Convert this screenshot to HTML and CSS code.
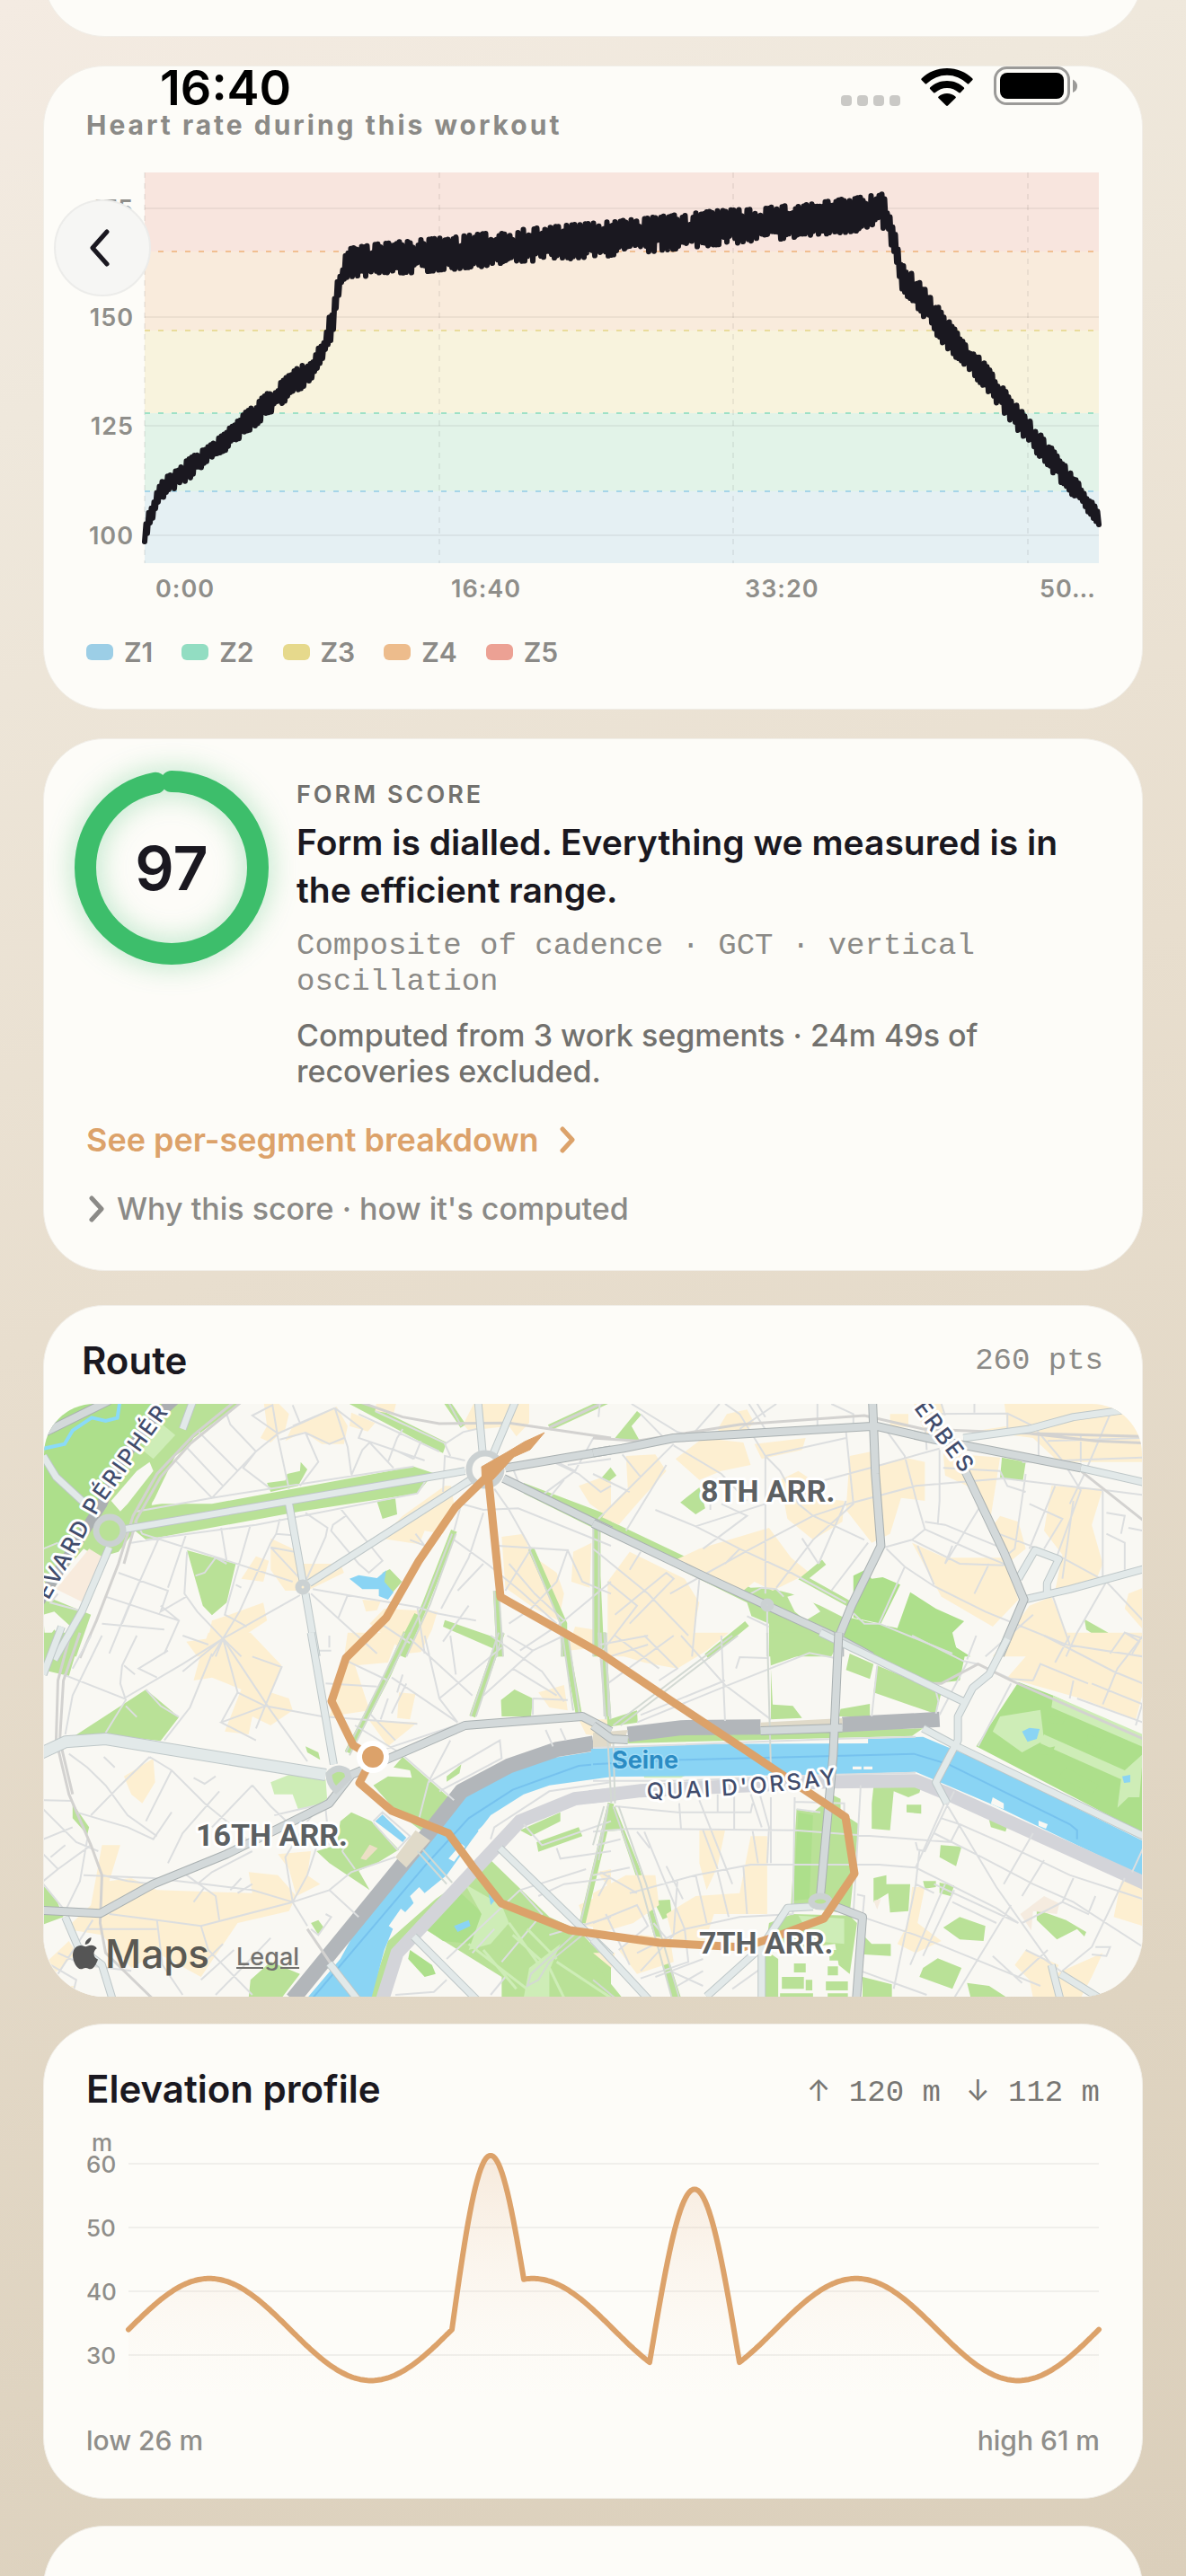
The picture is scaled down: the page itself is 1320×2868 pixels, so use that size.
FILE: index.html
```html
<!DOCTYPE html>
<html lang="en">
<head>
<meta charset="utf-8">
<meta name="viewport" content="width=device-width, initial-scale=1">
<title>Workout detail</title>
<link rel="stylesheet" href="styles.css">
</head>
<body>
<div class="screen">
  <header class="status" aria-label="Status bar">
    <time class="status-time">16:40</time>
    <div class="status-icons">
      <svg width="66" height="12" viewBox="0 0 66 12" aria-hidden="true"><g fill="#cac9c6"><rect width="12" height="12" rx="4"/><rect x="18" width="12" height="12" rx="4"/><rect x="36" width="12" height="12" rx="4"/><rect x="54" width="12" height="12" rx="4"/></g></svg>
      <svg width="58" height="42" viewBox="0 0 58 42" aria-hidden="true"><path d="M29 0C18 0 8 4 .8 11.300Q-.2 12.300 .8 13.300L4.500 17Q5.500 18 6.500 17A32 32 0 0 1 51.500 17Q52.500 18 53.500 17L57.200 13.300Q58.200 12.300 57.200 11.300C50 4 40 0 29 0ZM29 14C21.500 14 15 16.800 10.300 21.300Q9.300 22.300 10.300 23.300L14.200 27.200Q15 28 16 27.100A19 19 0 0 1 42 27.100Q43 28 43.800 27.200L47.700 23.300Q48.700 22.300 47.700 21.300C43 16.800 36.500 14 29 14ZM29 28C25.300 28 22 29.300 19.600 31.500Q18.700 32.400 19.600 33.300L28 41.500Q29 42.400 30 41.500L38.400 33.300Q39.300 32.400 38.400 31.500C36 29.300 32.700 28 29 28Z"/></svg>
      <svg width="94" height="44" viewBox="0 0 94 44" aria-hidden="true"><rect x="1.500" y="1.500" width="82" height="40" rx="13" fill="none" stroke="#9b9a98" stroke-width="3"/><rect x="7" y="7" width="71" height="29" rx="8"/><path d="M88 14.500Q93 17 93 22T88 29Z" fill="#9b9a98"/></svg>
    </div>
  </header>
  <button class="back" type="button" aria-label="Back">
    <svg width="22" height="42" viewBox="0 0 22 42" aria-hidden="true"><path d="M19 3L3 21L19 39" fill="none" stroke="#1a1820" stroke-width="5" stroke-linecap="round" stroke-linejoin="round"/></svg>
  </button>

  <main class="feed">
    <section class="card card-previous"></section>

    <section class="card heart">
      <h2 class="eyebrow">Heart rate during this workout</h2>
      <svg class="chart" viewBox="0 0 1128 490" role="img" aria-label="Heart rate over time">
        <rect x="65" y="0" width="1062" height="88" fill="#f8e5de"/>
        <rect x="65" y="88" width="1062" height="88" fill="#f9ebdc"/>
        <rect x="65" y="176" width="1062" height="92" fill="#f8f3dd"/>
        <rect x="65" y="268" width="1062" height="87" fill="#e2f3e8"/>
        <rect x="65" y="355" width="1062" height="80" fill="#e5f0f3"/>
        <path class="grid" d="M65 40H1127M65 161H1127M65 282H1127M65 404H1127"/>
        <path class="grid-dashed" d="M65 0V435M393 0V435M720 0V435M1048 0V435"/>
        <g class="zone-edge">
          <path d="M65 88H1127" stroke="#f1bf91"/><path d="M65 176H1127" stroke="#e9dc9b"/>
          <path d="M65 268H1127" stroke="#9ee1c6"/><path d="M65 355H1127" stroke="#a6d5e8"/>
        </g>
        <path id="heart-line" class="heart-line"/>
        <g class="axis axis-strong" text-anchor="end">
          <text x="53" y="50">175</text><text x="53" y="171">150</text><text x="53" y="292">125</text><text x="53" y="414">100</text>
        </g>
        <g class="axis axis-strong">
          <text x="77" y="473">0:00</text><text x="406" y="473">16:40</text><text x="733" y="473">33:20</text><text x="1061" y="473">50…</text>
        </g>
      </svg>
      <ul class="legend">
        <li><i class="z1"></i>Z1</li><li><i class="z2"></i>Z2</li><li><i class="z3"></i>Z3</li><li><i class="z4"></i>Z4</li><li><i class="z5"></i>Z5</li>
      </ul>
    </section>

    <section class="card form">
      <div class="form-top">
        <div class="ring">
          <svg viewBox="0 0 216 216" aria-hidden="true"><circle cx="108" cy="108" r="96" pathLength="100" transform="rotate(-90 108 108)"/></svg>
          <strong>97</strong>
        </div>
        <div class="form-copy">
          <h2 class="form-label">FORM SCORE</h2>
          <p class="headline">Form is dialled. Everything we measured is in the efficient range.</p>
          <p class="mono form-mono">Composite of cadence · GCT · vertical oscillation</p>
          <p class="form-note">Computed from 3 work segments · 24m 49s of recoveries excluded.</p>
        </div>
      </div>
      <a class="breakdown" href="#segments">See per-segment breakdown
        <svg width="20" height="30" viewBox="0 0 20 30" aria-hidden="true"><path d="M4 3L15 15L4 27"/></svg></a>
      <button class="why" type="button">
        <svg width="20" height="30" viewBox="0 0 20 30" aria-hidden="true"><path d="M6 3L17 15L6 27"/></svg>
        Why this score · how it's computed</button>
    </section>

    <section class="card route">
      <div class="route-head"><h2 class="title">Route</h2><span class="mono">260 pts</span></div>
      <div class="map">
        <svg viewBox="49 1562 1222 660" role="img" aria-label="Map of the route through Paris">
          <defs>
            <g id="nw-light"><path d="M240 785L1170 590M690 700L728 960M735 1000L765 1210M745 965L1185 620M1205 350L1218 530M1310 350L1248 530M20 540L55 610L170 740M430 350L400 450M200 845L125 1060L50 1220"/></g>
            <g id="nw-grey"><path d="M1275 615L1568 790M1280 580L1568 520M10 470L200 355"/></g>
            <g id="ne-light"><path d="M1330 580L1510 630M1010 480L1190 450L1310 410L1470 383M1175 1020L1300 985L1510 915M1160 950L1205 855L1270 885L1238 965V998"/></g>
            <g id="ne-grey"><path d="M0 530L80 515L220 480L770 440L930 485L1080 520L1330 580M762 350L770 600L785 840L705 1040L672 1140V1210M1015 590L1120 860L1175 1020L1110 1205M0 765L290 935L475 1040L670 1150L760 1210"/></g>
            <g id="sw-light"><path d="M750 -10L812 430M80 940L115 1040L180 1100L210 1220M1265 710L1568 1070M1030 1005L1205 1220M800 1095L880 1220M70 -30L20 130"/></g>
            <g id="sw-wide"><path d="M10 395L80 355L190 345L790 465"/></g>
            <g id="sw-grey"><path d="M20 918L175 928L320 830L520 730L800 560L860 465L1170 300L1490 270L1568 320"/></g>
            <g id="se-light"><path d="M620 -10L1010 220M1130 10L1080 130L1035 175L995 270V350L935 490L965 560M900 310L1000 375L1505 672M0 1015L155 1220M310 1205L460 1040V1220M460 1040L530 910L600 905M1250 1100L1275 1220M1275 1130L1380 1210"/></g>
            <g id="se-grey"><path d="M670 -10L655 400L620 870M650 900L735 940L718 1220M0 300L50 345L95 348M457 318L680 308"/></g>
          </defs>

          <rect x="49" y="1562" width="1222" height="660" fill="#f9f8f3"/>

          <g class="areas">
            <g transform="translate(40 1440) scale(.40816 .33333)">
              <path class="park-deep" d="M10 350H385L240 600L190 740L150 800L20 860Z"/>
              <path class="park" d="M385 350H570L430 480L315 700H480L1030 575L1085 598L1040 665L720 725L300 820L270 790L225 860L170 880L130 850L60 950L10 1020V850L150 790L230 560Z"/>
              <path class="ground" d="M275 590L310 560L320 590L250 700L230 725L205 690Z"/>
              <path class="ground" d="M440 485L480 490V670L315 705L340 640L380 540Z"/>
              <path class="park-light" d="M340 430L380 470L320 550L290 520Z"/>
              <path class="park" d="M10 1030L50 1020L150 1070L110 1210H10Z"/>
              <path class="ground" d="M20 1070L50 1060L95 1110L70 1150L50 1120L25 1160Z"/>
              <path fill="#f8ebdd" d="M145 850L185 880L130 1030L55 985Z"/>
              <path class="park" d="M630 630L680 622L685 600L720 590L722 560L740 585L715 640L640 660ZM930 692L980 682L985 735L945 750ZM412 855L545 900L520 1030L480 1072L455 1040ZM830 350H880L1120 495L1110 530L1090 520ZM1330 630L1568 740V810L1330 665ZM1115 1088L1260 1150L1250 1185L1110 1110ZM945 930L965 918L998 960L970 1000L945 970ZM1540 620L1568 590V630Z"/>
              <path class="built" d="M620 350H650L690 400L680 450L640 495L612 480L630 440ZM700 440L820 375L850 440L840 500L780 500L730 460L680 490ZM860 395L925 430L905 458L855 440ZM930 350H985L975 400L925 390ZM1165 435L1200 350H1345V430L1310 475L1290 440L1180 455ZM1115 640H1132L1140 700L1110 800L1060 790L1045 835L940 815L1000 740ZM640 815L700 850L725 900L830 900L840 930L740 990L680 990L640 920ZM560 950L600 875L635 890L620 960ZM480 1090L540 1065L620 1030L630 1090L580 1130V1210H440L410 1160L470 1150ZM910 1100L950 1050L1095 1060L1080 1120L1050 1195L1010 1200ZM1270 810L1330 800L1350 870L1420 930L1440 1000L1425 1090L1360 1050L1280 980ZM1480 640L1568 600V750L1510 700ZM1470 1110L1520 1120L1530 1180L1450 1190ZM1465 860L1515 830L1510 980L1460 960ZM890 1020L940 1025L930 1055L900 1060Z"/>
              <path class="tree-line" d="M1140 790L1060 1040L1000 1210M1255 990L1265 1210M1527 780V1210M1350 850L1440 1100V1210M1115 350L1165 440M1568 350L1400 445M1040 1070L985 1200"/>
              <path class="water" d="M855 950L880 938L930 948L955 922L950 960L975 995L960 1020L935 1008V985L890 985ZM10 430L45 385L80 375L20 460Z"/>
              <path class="stream" d="M10 518L78 500L100 455L152 412L190 423L222 413L230 350"/>
            </g>
            <g transform="translate(660 1440) scale(.40816 .33333)">
              <path class="park" d="M120 390L132 402L105 440L130 495L60 480ZM22 615L48 578L64 605L40 628ZM238 695L290 645L306 715L280 735ZM0 730L430 980L470 978L540 1000L620 1040L700 1090L650 1210H480V1100L432 1075L420 1030L0 775ZM1115 545L1180 560L1172 625L1110 612ZM1340 1085L1405 1130L1385 1152L1345 1120Z"/>
              <path class="park-deep" d="M710 940L740 922L760 950L790 945L838 970L785 1100L710 1080ZM865 995L935 1050L1012 1092L980 1130L990 1180L1030 1210H770L680 1160L700 1080L830 1115Z"/>
              <path class="ground" d="M530 1010L560 1000L600 1030L620 1060L580 1090L550 1060Z"/>
              <path class="built" d="M365 400L420 385L440 430L400 470L355 480L340 450ZM90 540L170 535L200 590L120 700L70 770L25 745L60 690L95 650ZM225 550L300 480L410 495L430 570L350 590L290 620ZM440 500L580 480L570 520L460 550ZM510 620L560 590L620 640L610 680L685 690L680 760L600 820L530 750ZM700 540L760 525L780 570L850 545L905 560V690L840 680L810 800L760 830L690 720ZM810 400H860V445L810 440ZM870 350H950L960 470L905 465ZM1120 350H1440L1500 410V560L1270 560L1200 480L1050 455L1130 440ZM955 530L1110 545L1085 740L1020 640L960 605ZM1250 640L1390 650L1360 770L1390 900L1370 960L1260 990L1280 870L1230 790ZM1110 740L1160 760L1180 850L1130 900L1080 790ZM870 830L960 880L1120 880L1160 1020L1090 1110L950 1010ZM1190 1040L1250 1010L1320 1210H1090ZM290 850L480 780L540 880L590 930L490 990L440 960L400 1000L220 890ZM40 960L100 860L250 950L290 1030L260 1210H40ZM1460 1000L1500 980V1120L1450 1050Z"/>
              <path class="tree-line" d="M12 780V940L22 1210M630 895L575 950L700 1035M420 1100L310 1210"/>
            </g>
            <g transform="translate(40 1820) scale(.40816 .33333)">
              <path class="park" d="M10 -10H125L90 135L20 115ZM105 335L300 180L390 272L340 352L190 330ZM1268 215L1305 180L1355 210L1350 270H1270ZM920 500L960 470L1025 475L1020 450L975 440L1000 405L1125 540L1060 660L985 590ZM830 620L860 590L915 620L990 715L930 760L880 785L910 850L800 760L765 720L820 700ZM735 370L770 390L775 415L740 390ZM100 560L145 640L140 665L100 610ZM20 835L55 880L75 940L20 965ZM750 960L770 950L785 975L770 1000ZM580 1210L585 1150L640 1090L720 1130L670 1210ZM1120 470L1160 430L1155 460L1120 488ZM1365 690L1480 640L1490 670L1370 722ZM1320 650L1430 590V620L1350 670Z"/>
              <path class="park-light" d="M640 490L690 465L790 480L795 560L715 580L700 530L650 530Z"/>
              <path class="park" d="M1240 750L1400 940L1480 985L1568 1100V1210H1270V1140L1060 980L1000 1060L960 1210H910L960 1020L1090 880Z"/>
              <path class="park-deep" d="M1150 850L1220 930L1190 1030L1110 1020L1065 980L1090 900Z"/>
              <path class="park-light" d="M1170 830L1270 900L1290 960L1240 1030L1180 1050L1215 930ZM1330 1210L1345 1110L1430 1030L1400 1120L1400 1210Z"/>
              <path class="ground" d="M1010 1040L1090 1110L1120 1140L1085 1190L1035 1185V1140L1000 1080Z"/>
              <path class="park-deep" d="M1020 1050L1080 1100L1090 1130L1060 1140L1015 1080Z"/>
              <path class="built" d="M470 -10H585L670 100L640 190L690 210L700 250L640 300L590 270L580 330L515 320L550 210L560 180L480 140L430 150L450 60ZM850 -10H990L960 90L870 100L910 250L800 270L830 160ZM990 190L1035 195L1020 280L985 275ZM910 285L1040 290L960 370ZM1370 190L1440 165L1450 250L1400 240ZM1480 280H1568V340L1500 330ZM240 470L320 410L325 490L290 560L260 530ZM180 700L230 700L200 820L260 810L330 850L590 860L580 790L660 800L710 870L690 920L550 960L450 1140L330 1060L260 1110L180 1000L80 980L150 900ZM660 730L750 720L740 800L775 830L710 870L690 780ZM20 1100L90 1020L110 1060L50 1130ZM40 1170H105V1210H50ZM1480 900L1568 850V980L1500 970ZM1530 790L1568 780V850Z"/>
              <path class="tree-line" d="M1010 -10L960 130L850 390M1270 -10L1190 270M1440 -10L1480 260M1545 -10L1560 270M1568 560L1490 960"/>
              <path fill="#ecdfc5" d="M885 745L910 698L932 710L900 750Z"/>
              <path class="water" d="M740 1210L830 1080L870 990L950 870L1060 690L1130 590L1180 530L1290 460L1400 410L1568 378V472L1400 500L1330 530L1240 600L1190 680L1120 800L1040 880L980 960L950 1050L915 1210ZM925 620L945 598L1010 675L1000 690ZM1140 970L1180 950L1185 970L1150 990ZM1230 830L1262 870L1240 900Z"/>
              <path class="current" d="M755 1210L1060 770L1180 610L1300 515L1480 435L1568 425"/>
              <path class="ground" d="M1020 870L1045 840L1060 860L1035 905ZM962 970L995 912L1008 925L980 985ZM1265 590L1290 570L1300 580L1270 605ZM1125 745L1160 695L1170 705L1140 755ZM1205 650L1225 628L1232 640L1215 665Z"/>
              <path class="quay-south" d="M945 1215L985 1060L1160 830L1320 620L1470 545L1580 530"/>
              <path class="quay" d="M700 1215L1070 660L1160 520L1290 435L1420 380L1520 360"/>
              <path fill="#e0dac9" d="M980 740L1035 650L1075 685L1010 775ZM1518 340L1568 320V375H1522Z"/>
            </g>
            <g transform="translate(660 1820) scale(.40816 .33333)">
              <path class="park" d="M480 -10H640L625 50L590 55L485 100V280L570 275L545 235L490 230ZM700 60L765 95L755 145L690 115ZM775 100L950 190L935 262L765 190ZM675 245L755 228V270H670ZM555 580L600 590L630 560L650 530L675 545V590L725 630L700 930L540 900ZM545 930L700 935L720 960L700 1130L670 1100L660 1030L470 1060L470 1210H505V1080L470 1050L480 960ZM765 505H895L890 525L860 540L820 520L810 650L760 645V560ZM855 565H895V595L855 590ZM948 700L1005 705L990 770L945 740ZM765 810L800 800V830L865 830L860 920L810 925L805 860L765 890ZM900 820H935V840L905 845ZM945 825L985 835L975 870L945 860ZM165 885L210 882L215 935L190 948ZM955 975L1000 940L1070 970L1065 1020L1000 1015ZM1210 915L1290 950L1345 990L1340 1005L1320 980L1265 1015L1210 950ZM900 1110L940 1078L1005 1110L980 1180L890 1140ZM740 1005L760 1030L812 1030V1070L740 1065ZM735 1140L815 1165V1210H735ZM1020 1160L1080 1170L1130 1210H1030ZM1080 615H1135L1125 655L1085 640ZM515 1140H575V1180H515ZM548 1095H580V1125H548ZM635 1155H695V1185H635ZM640 1105H668V1135H640ZM580 1150H598V1185H580ZM645 1050H670V1085H645ZM510 1195H600V1210H510ZM640 1195H695V1210H640ZM0 1090L80 1210H0ZM85 345L250 318L900 310L870 335L95 360ZM40 600L60 570L125 770L240 1210H215L130 850L75 650L30 655ZM20 -10H35L45 280L120 250L122 290L40 305Z"/>
              <path class="park-deep" d="M680 -10H975L990 40L1015 60L1000 150L930 160L760 75ZM1160 155L1255 200L1500 340V660L1045 370Z"/>
              <path class="park-light" d="M1255 200L1500 330V372L1250 240ZM1110 270L1220 248L1230 350L1170 390L1090 320ZM1230 330L1450 450L1500 395L1490 540H1460L1430 575L1440 480L1220 360ZM560 935L685 945V1030L600 1020ZM135 455H270L240 475H140Z"/>
              <path class="park-deep" d="M1240 270L1290 275L1280 295L1245 290ZM1225 380L1260 370L1250 400L1215 395ZM1290 440L1380 500L1360 530L1270 470ZM1350 330L1400 350L1380 380L1345 360ZM560 590L600 600L590 880L545 885Z"/>
              <path class="built" d="M40 -10H370L310 50L230 110L140 90L60 60ZM1150 -10H1500V190L1480 280L1330 210L1130 140L1180 70L1130 30ZM0 280H15V320L0 310ZM290 650H360L340 770L310 850L290 760ZM430 670H475V930H330L300 1040L220 1020L200 930L280 870L400 860ZM0 860L90 800L170 800L180 900L110 960L0 1000ZM870 840H905L885 960L950 1020L880 1060L830 1030L860 960ZM1440 820L1500 830V970L1420 940ZM1150 1100L1180 1050L1270 1100L1260 1130L1390 1060L1360 1140L1330 1210H1200L1190 1150ZM70 1050L130 1000L210 1010L220 1090L120 1130ZM0 1060L60 1060L50 1110Z"/>
              <path fill="#f5ebdf" d="M1165 930L1230 870L1272 895L1265 930L1200 920L1195 985ZM765 885L785 880L775 915Z"/>
              <path class="water" d="M-5 378L300 362L750 360V345L900 338L1060 420L1510 692V810L1320 700L1100 570L880 455L640 465L-5 472ZM1170 320L1190 308L1218 312L1210 345L1185 355ZM1443 470L1465 465V490L1448 492Z"/>
              <path class="current" d="M0 430L240 415L875 395L970 430L1300 630L1320 650V680"/>
              <path class="ground" d="M1090 540L1120 560V580L1085 562ZM1215 618L1240 630L1235 645L1215 635ZM708 437H732V447H708ZM738 437H762V447H738Z"/>
              <path class="quay-south" d="M-10 539L130 518L640 488L880 485L960 525L1510 830"/>
              <path class="quay" d="M95 330L240 308L457 305M680 297L945 280"/>
              <path fill="#e0dac9" d="M457 290L680 276V298L457 308ZM0 325L95 315L85 350L0 378Z"/>
            </g>
          </g>

          <g class="streets">
            <g transform="translate(40 1440) scale(.40816 .33333)">
              <path d="M520 400L530 435L600 525L480 680L380 555M410 510L510 640M440 455L550 590L600 525L660 465L590 405L645 370L660 480L690 650M600 525L565 580L640 650M660 465L815 380L700 440M815 380L850 510L860 600M815 380L890 450L880 480L1060 555M665 485L735 462L800 500L840 480M735 462L770 560L720 640M910 495L890 520L860 605M910 495L975 580M970 515L1030 550M960 560L985 480L1000 450M1030 550L1050 490M880 400L1100 525M925 390L1120 500M1130 540L1115 500L1165 460L1220 445M1110 660L1115 540L1170 555M275 725L480 680L1030 575M300 820L600 770L1040 665L1075 600M270 755L290 800L560 905L700 960M260 830L335 815L250 1050L200 1200M225 930L360 990L340 1060L410 1010M280 965L235 1100M190 1010L390 1090L350 1200M340 1040L390 1090M360 980L410 800M435 940L460 930L490 880L520 900M505 780L520 890M585 770L540 960L515 1070L575 1110M545 970L560 980M665 750L655 800L640 830L555 1060L480 1210M510 1150L720 1005M510 1150L440 1060L405 1000L412 860M510 1150L560 1210M510 1150L490 1210M655 800L700 805M640 845L705 860M640 845L720 950M735 730L795 780L790 810L735 960M830 715L945 890L908 930L880 900L805 790L810 770L845 740M755 985L1040 1045L1090 1065L1200 1090M750 1000L930 1200M850 1005L825 1080M1040 1045L1060 1200M940 1100L1020 1165M1035 800L1060 840L1020 820M1140 790L1160 700L1220 720L1315 715L1568 840M1140 820L1230 900L1320 990L1420 1100M1105 1050L1180 880L1220 730M1150 990L1220 900M1260 840L1450 855L1420 960L1350 1050L1290 1100M1350 850L1280 990M1450 855L1490 960L1568 1000M1290 900L1360 1000L1440 1090M1320 1190L1430 1100L1568 960M1110 1160L1180 1040M1410 560L1480 600L1540 660L1568 640M1420 560L1470 590L1370 680M1470 590L1520 480M1450 570L1568 550M1400 680L1440 620M1300 580L1320 640M1250 650L1290 720L1350 850M700 370L720 430M180 1100L350 1120M60 1000L40 1030L130 1060M20 850L60 830"/>
              <path class="trees-road" d="M1135 800L1060 1035L990 1210M1145 800L1075 1035L1010 1210M1250 990L1258 1210M1262 990L1274 1210M1520 780V1210M1535 780V1210M1345 850L1430 1100L1435 1210M1120 350L1160 440"/>
              <path class="rail" d="M550 350L430 470L330 600L265 740L225 900L165 1090L120 1215M570 350L420 500L340 610L275 750L240 900M860 350L1000 410L1100 432L1290 430L1568 480M1568 350L1400 445"/>
              <path class="beltway" d="M10 1025L180 700L230 560L310 430L380 350"/>
            </g>
            <g transform="translate(660 1440) scale(.40816 .33333)">
              <path d="M20 350L15 410M105 366L230 460L270 470L345 366M130 400L190 475M440 350L470 410M425 366L480 470M500 366L400 450M612 350V445M650 366L710 400V440M690 460L710 700L600 820L500 980M690 480L470 540V1000M470 540L400 400L360 366M470 540L510 590L560 700L600 740L740 820M600 740L430 850L210 1000M600 740L710 695L880 640L1120 615L1390 655M220 500L15 750M220 505L350 600L420 690M80 535L130 610M170 720L280 775L400 850L540 930L690 1030M200 570L90 790M0 600L100 660M280 775L470 700M320 690V720M350 700L420 740L300 850M620 625L770 575L945 515M800 455L850 540L880 680L905 785L870 820L795 845M905 420L910 520M880 400L1130 398V450M950 366L960 405M1040 366V395M1130 398L1200 440L1280 555L1330 655L1240 960L1300 1170M945 520V690L940 770M955 580L1110 590M905 760L960 770L1120 850M905 785L1060 870L1130 905M870 820L1000 900L1120 905M800 850L850 910L930 975L1070 1060L1290 1170L1500 1210M885 840L930 970M980 840L960 900L1060 700M850 910L780 1100H740L710 1065M780 1100L980 1200M1085 790L1280 880L1400 960L1500 1090M1110 590L1130 640L1180 660M1180 600L1150 850L1130 870M1260 640L1190 850M1390 655L1390 960M1310 690L1280 950M1190 700L1280 750L1230 850M1410 400L1340 600L1300 700M1170 560L1500 545M1215 470V540M1240 490L1500 480M1330 470V560M1400 655L1500 670M1400 730L1450 740L1440 800M1460 780L1500 790M1400 800L1450 830V920M570 815L615 900M615 900L690 690M650 990L750 830M60 1070L200 930L220 950L100 1100M0 850L150 1000L260 1140M40 960L120 1040L20 1200M130 860L100 920M290 950L270 1210M400 850L360 900M475 1050V1210M420 1075L480 1110M430 1000L460 980L500 985L520 1010M1200 1070L1070 1210M1400 960L1320 1130L1290 1210M1410 1200L1450 1130L1490 1160L1470 1200M1450 1130L1500 1150M1040 1000L1080 900"/>
              <path class="rail" d="M0 480L120 490L400 435L740 405L900 450L1200 465L1500 475M1190 465L1370 490L1500 497M1330 590L1500 755"/>
            </g>
            <g transform="translate(40 1820) scale(.40816 .33333)">
              <path d="M75 130L240 210L400 95L510 10L550 190L625 235L670 105L590 70M510 10L640 250L740 420M510 10L400 120M625 235L505 290L600 350M625 235L780 270L1040 295M625 235L600 310M550 190L505 290M180 0L100 200L80 330M275 0L235 100L230 160L245 215L190 325M150 0L100 110M400 0L470 30M480 60L420 240L350 350M360 50L280 110L330 140M240 100L270 130M245 235L275 272M300 180L340 235L390 272M90 395L140 440L190 500L250 600L330 670M185 405L215 440M310 405L230 500L150 600M310 405L370 450L460 560L540 640L590 700M430 475L460 495L490 470M370 450L300 620M500 520L400 660L360 760M590 500L640 570L700 640M590 500L480 640M20 550L100 552M20 580L110 690L170 720M40 740L80 700M20 680L100 640M110 590L250 640L320 680L370 590M20 730L60 780L150 700M60 780L20 820M20 830L80 920M130 800L320 810L460 830L590 850L700 890M140 680L120 820L80 920M180 800L250 820L320 830M400 790L490 870L500 950M440 830L480 790L590 720M460 840L430 890M530 850L560 810M550 860L590 830M700 890L680 740L740 620L800 540M700 890L450 970L330 950L200 930M700 890L740 800L780 650M700 890L800 850L860 790L980 740M700 890L740 970M450 970L470 1050L590 1200M510 1030L460 1090M540 1050L450 1150M490 1200L570 1100L640 1010M330 950L345 1100L400 1200M140 980L330 980M155 950L60 1130M60 1060L130 1100L260 1120M40 1100L110 1150L100 1200M790 930L805 940L770 1000L750 980M800 850L880 940M790 580L800 700M650 600L720 580L790 560M840 80L960 150M790 160L930 170M1010 160L970 260M1000 130L985 190M960 210L940 280M870 300L990 390M910 260L980 350M1060 0L1100 210L1150 290M1130 0L1145 130M1150 290L970 140M1100 210L1270 40M1020 10L1190 200M1285 0L1355 50L1440 0M1355 50L1220 200M1300 110L1420 200M1355 210L1450 215M1355 210V265M1240 0L1380 120L1440 220M1145 300L950 380M1070 490L1265 350L1270 410L1100 520M1005 405L1140 550M1070 490L1045 610M1130 350L1070 490M1390 315L1410 370M1430 310L1445 350M800 40V0M770 50H805M920 620L945 590L1020 670L985 715L920 625M835 720L850 690M835 720L870 780M1240 680L1250 640L1400 520L1568 490M1320 850L1500 780M1370 870L1440 830L1568 810M1420 710L1430 745L1568 720M1330 630L1380 700L1568 620M1320 850L1120 1080M1250 980L1190 1060M1320 850L1380 930L1270 1090M980 1200L1085 1190L1120 1150M1280 1140L1240 1200M1568 940L1400 1000"/>
              <path class="park-path" d="M1290 960L1390 1130M1300 1000L1400 1110L1440 1210M1340 980L1420 1080M1180 1030L1360 1200M1420 1090L1568 1210M1220 1050L1310 1180"/>
              <path class="trees-road" d="M1005 -10L950 130L845 390M1020 -10L965 130L855 400M1262 -10L1185 270M1275 -10L1200 270M1435 -10L1465 250M1450 -10L1482 260M1540 -10L1550 270M1555 -10L1562 270M1562 560L1485 960M1040 720L1120 830M1055 715L1135 825M1480 985L1350 1130L1340 1170L1370 1150L1400 1090L1500 990"/>
              <path class="rail" d="M95 -10L60 150L55 350L90 530L150 700L180 800L175 960L190 1060L320 1215M120 -10L75 150L65 350L100 530M740 980L870 1215"/>
            </g>
            <g transform="translate(660 1820) scale(.40816 .33333)">
              <path d="M20 30L150 0M40 160L220 0M140 0L230 110L180 150M60 0L180 110M120 290L360 170L590 58L660 75M350 0L360 285M130 265L360 150M240 0L360 165L485 280M390 110L400 72L475 75M20 80L150 30M870 0L1010 85L1050 95L1140 145L1200 150M775 100L760 270M935 185L942 220L935 260M945 265L1020 90M1020 80L1045 0M1050 370L1140 160M1200 150L1220 95L1350 160M1300 0L1260 90M1300 210L1310 150M1390 230L1430 110L1500 0M1320 210L1500 290M1480 300L1500 220M1360 160L1500 230M1230 0L1420 120L1500 160M0 375L660 345L880 338M0 485L240 485L640 465L880 458M60 570L230 590L430 590L435 560M0 655L100 645L550 650L980 690M340 530V590M385 530V645M430 530L460 640M290 550L380 830M235 560L240 645M455 530L480 640L475 760M485 540V760M550 540L545 930L400 940L250 980L120 1060M555 580L620 590M550 555L685 560V600M730 500L710 930M10 700L75 680M120 655L155 710M140 655L250 980L260 1090L130 1145M300 650L340 780M435 650L450 760M100 860L280 800L430 765H780L880 775L1100 910L1160 960M20 790L120 860M0 800L100 775M15 870L45 800M35 930L100 1100M0 960L120 900L150 970L70 1050M200 770L245 880M230 820L220 1000L130 1120M165 960L220 1040M280 800L310 960M340 790L370 940M410 770L420 930M170 1140L300 1080M230 1170L300 1120M210 1120L300 1170M380 1180L460 1110M720 865L740 870L735 940L880 1000L1060 1090L1220 1170M880 775L960 555L1100 840L1250 1100M880 690L885 715L905 720L985 520M930 660L1060 740L1200 830L1310 890L1500 1040M950 610L1000 630L1130 700L1300 800L1500 880M1000 630L975 690M1200 660L1120 830M1230 750L1170 870M1310 810L1280 890L1170 960M1450 810L1360 1040L1280 1120M1470 790L1500 710M890 720L880 830L820 1180M960 830L865 1100M985 850L900 1070M880 830L930 860M930 830L1160 960M980 890L1100 960M1140 900L985 1210M730 1120L910 1200M1370 1040L1410 1040L1400 1070L1360 1065M1180 1050L1230 1080L1330 1170M1240 1050L1160 1140M1090 1070L1170 1160M1370 870L1350 930L1280 890"/>
              <path class="trees-road" d="M15 -10L35 280M30 -10L48 280M55 300L380 0M75 300L395 0M40 345L50 560M55 345L60 560M30 570L0 700M40 580L15 750M55 570L130 830L215 1210M70 570L145 830L235 1210M475 -10L485 440M0 1150L60 1210"/>
              <path class="rail" d="M910 160L950 160L1050 95L1140 150L1500 345"/>
            </g>
          </g>

          <g transform="translate(40 1440) scale(.40816 .33333)"><use href="#nw-light" class="light-case"/><use href="#nw-light" class="light"/><use href="#nw-grey" class="grey-case"/><use href="#nw-grey" class="grey"/></g>
          <g transform="translate(660 1440) scale(.40816 .33333)"><use href="#ne-light" class="light-case"/><use href="#ne-light" class="light"/><use href="#ne-grey" class="grey-case"/><use href="#ne-grey" class="grey"/></g>
          <g transform="translate(40 1820) scale(.40816 .33333)"><use href="#sw-light" class="light-case"/><use href="#sw-light" class="light"/><use href="#sw-wide" class="wide-case"/><use href="#sw-wide" class="wide"/><use href="#sw-grey" class="grey-case"/><use href="#sw-grey" class="grey"/></g>
          <g transform="translate(660 1820) scale(.40816 .33333)"><use href="#se-light" class="light-case"/><use href="#se-light" class="light"/><use href="#se-grey" class="grey-case"/><use href="#se-grey" class="grey"/></g>

          <g class="circles">
            <ellipse cx="540" cy="1635" rx="18" ry="18"/><circle cx="122" cy="1703" r="15"/><circle cx="337" cy="1766" r="5"/><circle cx="854" cy="1786" r="4"/><ellipse cx="913" cy="2116" rx="10" ry="6"/><path fill="#b9e197" d="M366 1974Q375 1964 386 1971L388 1978L374 1992Q366 1985 366 1974Z"/>
          </g>

          <g class="track">
            <path d="M543 1640L557 1777L669 1840L746 1892L823 1943L893 1990L941 2022L951 2085L917 2135L864 2155L827 2167L734 2162L634 2148L558 2118L526 2077L499 2040L436 2015L400 1984L415 1955L393 1942L369 1893L385 1845L430 1800L466 1737L507 1677L543 1642"/>
            <path class="track-end" d="M606 1594L584 1604L564 1616L536 1632L537 1652L549 1646L572 1621L590 1613Z"/>
          </g>
          <circle cx="415" cy="1955" r="18" fill="#fff"/><circle cx="415" cy="1955" r="12" fill="#dca26a"/>

          <g class="labels">
            <path id="belt-label" d="M54 1781L113 1675L183 1578L253 1481" fill="none"/>
            <path id="avenue-label" d="M890 1398L1073 1642" fill="none"/>
            <path id="quay-label" d="M720 2002Q850 1999 945 1983" fill="none"/>
            <text class="street"><textPath href="#belt-label">EVARD PÉRIPHÉR</textPath></text>
            <text class="street" text-anchor="end"><textPath href="#avenue-label" startOffset="100%">ERBES</textPath></text>
            <text class="street"><textPath href="#quay-label">QUAI D'ORSAY</textPath></text>
            <text class="river" x="681" y="1968">Seine</text>
            <text class="district" x="780" y="1671">8TH ARR.</text>
            <text class="district" x="218" y="2054">16TH ARR.</text>
            <text class="district" x="778" y="2174">7TH ARR.</text>
          </g>
        </svg>
        <div class="attribution">
          <svg width="28" height="36" viewBox="0 0 28 36" aria-hidden="true"><path d="M20.500 0C21 3.500 17.500 8 13.800 8C13.300 4.500 17 .7 20.500 0ZM14.400 10.200C15.800 10.200 17.700 8.600 20.600 8.700C23.400 8.800 25.600 10.200 26.800 12.200C21.800 15.200 22.600 22.400 28 24.500C26.500 29 23.400 35.300 19.800 35.300C17.700 35.300 17 33.900 14.400 33.900C11.800 33.900 11 35.300 9 35.300C4.500 35.300 0 27 0 19.800C0 12.700 4.400 8.900 8.700 8.900C11.500 8.900 13 10.200 14.400 10.200Z"/></svg>
          <span class="maps">Maps</span>
          <a href="#legal">Legal</a>
        </div>
      </div>
    </section>

    <section class="card elevation">
      <div class="elevation-head">
        <h2 class="title">Elevation profile</h2>
        <p class="mono"><span><b>↑</b> 120 m</span><span><b>↓</b> 112 m</span></p>
      </div>
      <svg class="chart" viewBox="0 0 1128 302" role="img" aria-label="Elevation over distance">
        <defs><linearGradient id="fade" gradientUnits="userSpaceOnUse" x1="0" y1="22" x2="0" y2="296"><stop offset="0" stop-color="#dc9f68" stop-opacity=".2"/><stop offset="1" stop-color="#fbe3d0" stop-opacity="0"/></linearGradient></defs>
        <path class="grid" d="M47 34H1127M47 105H1127M47 176H1127M47 247H1127"/>
        <path id="elevation-fill" fill="url(#fade)"/>
        <path id="elevation-line" class="elevation-line"/>
        <g class="axis"><text x="6" y="20">m</text><text x="0" y="44">60</text><text x="0" y="115">50</text><text x="0" y="186">40</text><text x="0" y="257">30</text></g>
      </svg>
      <div class="range"><span>low 26 m</span><span>high 61 m</span></div>
    </section>

    <section class="card card-next"></section>
  </main>
</div>
<script src="charts.js"></script>
</body>
</html>
```
FILE: styles.css
```css
* { box-sizing: border-box; }
body { margin: 0; font-family: Inter, "Liberation Sans", sans-serif; color: #1a1820; }
h2, p, ul { margin: 0; padding: 0; font-weight: inherit; }
button { border: 0; padding: 0; background: none; font: inherit; cursor: pointer; }
svg { display: block; flex: none; }

.screen {
  position: relative;
  height: 100vh;
  overflow: hidden;
  background: linear-gradient(160deg, #f4ebe2 0%, #efe8dc 14%, #e8dece 45%, #dfd4c1 80%, #dbcfbb 100%);
}

.status {
  position: absolute;
  z-index: 2;
  inset: 66px 120px auto 178px;
  display: flex;
  justify-content: space-between;
  color: #000;
}
.status-time { font-size: 54px; line-height: 64px; font-weight: 600; }
.status-icons { display: flex; align-items: flex-end; gap: 23px; height: 52px; }
.back {
  position: absolute;
  z-index: 2;
  top: 222px;
  left: 60px;
  width: 108px;
  height: 108px;
  display: grid;
  place-items: center;
  padding-right: 6px;
  border: 2px solid #ececea;
  border-radius: 50%;
  background: #f6f6f4;
}

.feed { display: flex; flex-direction: column; gap: 32px; padding: 0 48px; }
.card {
  flex: none;
  padding: 0 47px;
  border: 1px solid #f1eee8;
  border-radius: 68px;
  background: #fdfcf8;
}
.card-previous { height: 200px; margin-top: -159px; }

.heart { padding-top: 45px; padding-bottom: 43px; }
.eyebrow { font-size: 30px; line-height: 40px; font-weight: 700; letter-spacing: 3px; color: #8b8a87; }
.chart { width: 100%; height: auto; overflow: visible; }
.heart .chart { margin-top: 33px; }
.grid { stroke: rgba(0, 0, 0, .05); stroke-width: 2; }
.grid-dashed { stroke: rgba(0, 0, 0, .06); stroke-width: 2; stroke-dasharray: 6 6; }
.zone-edge { stroke-width: 2; stroke-dasharray: 6 9; }
.heart-line { fill: none; stroke: #1a1820; stroke-width: 6; stroke-linecap: round; stroke-linejoin: round; }
.axis { font-size: 26px; font-weight: 500; fill: #8f8e8a; }
.axis-strong { font-size: 27px; font-weight: 600; letter-spacing: 1px; }
.legend { display: flex; gap: 32px; margin-top: 24px; list-style: none; font-size: 30px; line-height: 40px; font-weight: 600; color: #8b8a87; }
.legend li { display: flex; align-items: center; gap: 12px; }
.legend i { width: 30px; height: 18px; border-radius: 6px; }
.z1 { background: #9ccee6; }
.z2 { background: #92ddc2; }
.z3 { background: #e6d98c; }
.z4 { background: #edbc8c; }
.z5 { background: #eca194; }

.form { padding-top: 35px; padding-bottom: 46px; }
.form-top { display: flex; gap: 31px; margin-left: -13px; }
.ring { position: relative; flex: none; width: 216px; height: 216px; display: grid; place-items: center; }
.ring svg { position: absolute; inset: 0; overflow: visible; filter: drop-shadow(0 0 16px rgba(61, 190, 107, .4)); }
.ring circle { fill: none; stroke: #3dbe6b; stroke-width: 24; stroke-linecap: round; stroke-dasharray: 97 100; }
.ring strong { position: relative; font-size: 68px; line-height: 72px; font-weight: 600; }
.form-copy { padding-top: 9px; }
.form-label { font-size: 27px; line-height: 36px; font-weight: 600; letter-spacing: 3px; color: #72716e; }
.headline { margin-top: 8px; font-size: 39px; line-height: 53px; font-weight: 600; }
.mono { font-family: "Liberation Mono", "DejaVu Sans Mono", monospace; font-size: 34px; line-height: 40px; color: #8b8a87; }
.form-mono { margin-top: 16px; }
.form-note { margin-top: 20px; font-size: 34px; line-height: 40px; font-weight: 500; color: #72716e; }
.breakdown { display: flex; align-items: center; gap: 22px; width: max-content; margin-top: 34px; font-size: 36px; line-height: 44px; font-weight: 600; color: #dca26a; text-decoration: none; }
.breakdown path, .why path { fill: none; stroke: currentColor; stroke-width: 5; stroke-linecap: round; stroke-linejoin: round; }
.why { display: flex; align-items: center; gap: 14px; margin-top: 33px; font-size: 34px; line-height: 44px; font-weight: 500; color: #8b8a87; }

.route { margin-top: 6px; padding: 0; overflow: hidden; border-bottom: 0; }
.route-head { display: flex; align-items: center; justify-content: space-between; height: 109px; padding: 12px 43px 0 42px; }
.title { font-size: 42px; line-height: 48px; font-weight: 600; }
.map { position: relative; border-radius: 56px; overflow: hidden; }
.map > svg { width: 100%; height: auto; }
.map path, .map circle, .map ellipse { vector-effect: non-scaling-stroke; }
.ground { fill: #f9f8f3; }
.park { fill: #b9e197; }
.park-deep { fill: #addf8b; }
.park-light { fill: #ceedb7; }
.built { fill: #fdefd1; }
.water { fill: #8ad4f4; }
.stream { fill: none; stroke: #8adaf8; stroke-width: 4; }
.current { fill: none; stroke: #76c2ee; stroke-width: 2; }
.tree-line { fill: none; stroke: #b9e197; stroke-width: 7; }
.quay { fill: none; stroke: #b2b6ba; stroke-width: 17; }
.quay-south { fill: none; stroke: #d3d4d9; stroke-width: 15; }
.streets path { fill: none; stroke: #dcdedf; stroke-width: 2; }
.streets .trees-road { stroke: #d3d9d3; stroke-width: 2; }
.streets .park-path { stroke: #ceedb7; stroke-width: 3; }
.streets .rail { stroke: #d3d2d0; stroke-width: 3; }
.streets .beltway { stroke: #abafb2; stroke-width: 12; }
.light-case, .light, .grey-case, .grey, .wide-case, .wide { fill: none; stroke-linejoin: round; }
.light-case { stroke: #bec7c8; stroke-width: 9; }
.light { stroke: #e2e9e9; stroke-width: 7; }
.grey-case { stroke: #a9b0b1; stroke-width: 10; }
.grey { stroke: #d3d9da; stroke-width: 8; }
.wide-case { stroke: #bec7c8; stroke-width: 14; }
.wide { stroke: #e2e9e9; stroke-width: 12; }
.circles { fill: none; stroke: #cbd1d2; stroke-width: 7; }
.track path { fill: none; stroke: #dca26a; stroke-width: 9; stroke-linejoin: round; }
.track .track-end { fill: #dca26a; stroke-width: 1; }
.labels text { paint-order: stroke; stroke: #fff; stroke-width: 6px; stroke-linejoin: round; }
.street { font-size: 25px; font-weight: 500; letter-spacing: 3px; fill: #414c6c; }
.river { font-size: 27px; font-weight: 700; fill: #2b8cc4; }
.labels .river { stroke: #a4ddf6; stroke-width: 3px; }
.district { font-family: Roboto, "Liberation Sans", sans-serif; font-size: 34px; font-weight: 700; fill: #5c6062; }
.attribution { position: absolute; left: 32px; bottom: 20px; display: flex; align-items: center; color: #666; fill: #555; }
.maps { margin-left: 8px; font-size: 44px; line-height: 56px; font-weight: 500; color: #5a5953; }
.attribution a { margin: 8px 0 0 30px; font-size: 27px; line-height: 36px; font-weight: 500; color: #73726f; }

.elevation { margin-top: -2px; padding-top: 46px; padding-bottom: 44px; }
.elevation-head { display: flex; align-items: center; justify-content: space-between; height: 52px; }
.elevation-head .mono { display: flex; gap: 28px; padding-top: 6px; color: #777673; }
.elevation-head b { font-family: Inter, "Liberation Sans", sans-serif; font-size: 32px; font-weight: 400; }
.elevation .chart { margin-top: 23px; }
.elevation-line { fill: none; stroke: #dca26a; stroke-width: 6; stroke-linejoin: round; stroke-linecap: round; }
.range { display: flex; justify-content: space-between; margin-top: 20px; font-size: 30px; line-height: 40px; font-weight: 500; color: #8f8e8a; }
.card-next { height: 200px; margin-top: -2px; }
```
FILE: charts.js
```js
// Heart rate: upper and lower envelope of the signal, [x, high, low] in chart units.
const envelope = [
  [65, 388, 411], [73, 371, 388], [81, 347, 368], [93, 336, 355], [113, 319, 343],
  [139, 303, 318], [155, 289, 310], [172, 271, 297], [198, 249, 273], [223, 228, 253],
  [240, 213, 240], [252, 204, 228], [264, 188, 205], [273, 151, 185], [283, 106, 135],
  [291, 84, 115], [298, 82, 117], [416, 71, 107], [509, 61, 98], [593, 54, 92],
  [686, 44, 82], [795, 36, 72], [887, 24, 62], [893, 41, 68], [903, 78, 112],
  [910, 106, 138], [923, 116, 152], [934, 131, 165], [955, 158, 192], [972, 181, 210],
  [999, 211, 238], [1031, 254, 280], [1056, 283, 310], [1083, 318, 343],
  [1106, 348, 368], [1127, 378, 392]
];
let seed = 7;
const random = () => (seed = (seed * 16807) % 2147483647) / 2147483647;
const beats = [];
let segment = 0;
for (let i = 0; i <= 708; i++) {
  const x = 65 + i * 1.5;
  while (segment < envelope.length - 2 && envelope[segment + 1][0] < x) segment++;
  const [x0, h0, l0] = envelope[segment];
  const [x1, h1, l1] = envelope[segment + 1];
  const t = (x - x0) / (x1 - x0);
  const high = h0 + (h1 - h0) * t;
  const low = l0 + (l1 - l0) * t;
  const swing = random() ** 2 * 0.35;
  const y = i % 2 ? high + (low - high) * swing : low - (low - high) * swing;
  beats.push(x + " " + y.toFixed(1));
}
document.getElementById("heart-line").setAttribute("d", "M" + beats.join("L"));

// Elevation: rolling ground with two short climbs.
const points = [];
for (let d = 0; d <= 1080; d += 2) {
  let metres = 34 + 8 * Math.sin((d / 360) * 2 * Math.PI);
  if (d > 360 && d < 440) metres += 22 * Math.sin(((d - 360) / 80) * Math.PI);
  if (d > 580 && d < 680) metres += 30 * Math.sin(((d - 580) / 100) * Math.PI);
  points.push(47 + d + " " + (34 + (60 - metres) * 7.1).toFixed(1));
}
const line = "M" + points.join("L");
document.getElementById("elevation-line").setAttribute("d", line);
document.getElementById("elevation-fill").setAttribute("d", line + "V298H47Z");
```
